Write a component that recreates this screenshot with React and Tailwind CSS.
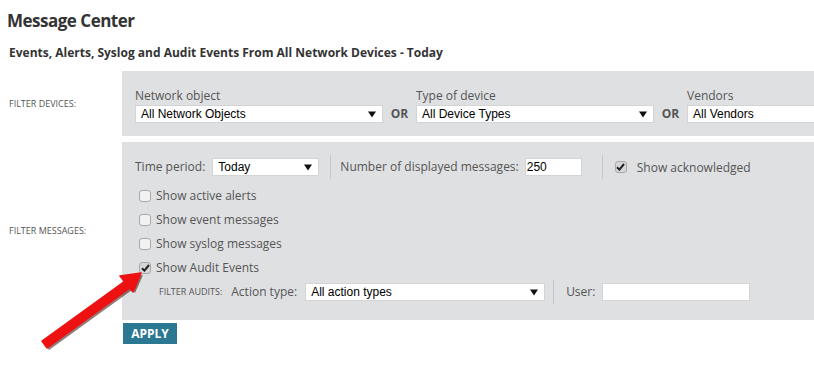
import React from 'react';

const font = { fontFamily: '"Open Sans", "Liberation Sans", sans-serif' };
const arial = { fontFamily: '"Liberation Sans", Arial, sans-serif' };

const Select = ({ value, className }) => (
    <div className={`shrink-0 flex items-center justify-between bg-white border border-[#d4d4d4] h-[18px] pl-[5px] pr-[6px] ${className}`}>
        <span className="text-[12px] text-black leading-none" style={arial}>{value}</span>
        <svg width="8" height="7" viewBox="0 0 8 7"><path d="M0 0.5 L8 0.5 L4 6.5 Z" fill="#111" /></svg>
    </div>
);

const Check = ({ checked }) => (
    <span className={`shrink-0 inline-flex items-center justify-center w-[12px] h-[12px] rounded-[3px] border border-[#a9a9a9] ${checked ? 'bg-[#d6d6d6]' : 'bg-[#f1f1f1]'}`}>
        {checked && (
            <svg width="9" height="8" viewBox="0 0 9 8"><path d="M1 4.2 L3.4 6.6 L8 1" stroke="#222" strokeWidth="2" fill="none" /></svg>
        )}
    </span>
);

const CheckRow = ({ checked, label }) => (
    <div className="flex items-center h-[24px] pl-[4px] gap-[5px]">
        <Check checked={checked} />
        <span className="text-[12px] text-[#555]">{label}</span>
    </div>
);

const Sep = ({ className = 'mx-[8px]' }) => <div className={`shrink-0 w-px h-[24px] bg-[#c6c6c6] ${className}`} />;

const Field = ({ label, width, children }) => (
    <div className="shrink-0 flex flex-col" style={{ width }}>
        <span className="text-[12px] text-[#555] leading-[19px]">{label}</span>
        {children}
    </div>
);

const Or = () => (
    <span className="shrink-0 mt-[19px] text-[12px] font-bold text-[#555] text-center h-[18px] leading-[18px] w-[33px]">OR</span>
);

const App = () => {
    return (
        <div className="relative w-[814px] h-[371px] bg-white overflow-hidden" style={font}>
            <h1 className="text-[17px] font-bold text-[#333] pl-[7px] pt-[7px] leading-[27px] tracking-[-0.5px]">Message Center</h1>
            <h2 className="text-[12px] font-bold text-[#333] pl-[9px] pt-[11px] leading-[16px]">
                Events, Alerts, Syslog and Audit Events From All Network Devices - Today
            </h2>

            {/* Filter devices */}
            <div className="flex mt-[10px]">
                <div className="w-[122px] shrink-0 flex items-center pl-[9px] text-[9px] text-[#555] uppercase">Filter devices:</div>
                <div className="flex-1 min-w-0 overflow-hidden bg-[#dfe0e2] h-[65px] pl-[13px] pt-[15px] flex items-start">
                    <Field label="Network object" width={248}>
                        <Select value="All Network Objects" className="w-[248px]" />
                    </Field>
                    <Or />
                    <Field label="Type of device" width={238}>
                        <Select value="All Device Types" className="w-[238px]" />
                    </Field>
                    <Or />
                    <Field label="Vendors" width={160}>
                        <div className="bg-white border border-[#d4d4d4] h-[18px] pl-[5px] w-[160px] flex items-center">
                            <span className="text-[12px] text-black leading-none" style={arial}>All Vendors</span>
                        </div>
                    </Field>
                </div>
            </div>

            {/* Filter messages */}
            <div className="flex mt-[6px]">
                <div className="w-[122px] shrink-0 flex items-center pl-[9px] text-[9px] text-[#555] uppercase">Filter messages:</div>
                <div className="flex-1 bg-[#dfe0e2] h-[178px] pl-[13px] pt-[13px]">
                    <div className="flex items-center h-[24px]">
                        <span className="text-[12px] text-[#555] mr-[7px]">Time period:</span>
                        <Select value="Today" className="w-[107px]" />
                        <Sep className="ml-[11px] mr-[9px]" />
                        <span className="text-[12px] text-[#555] mr-[6px]">Number of displayed messages:</span>
                        <div className="bg-white border border-[#d4d4d4] h-[18px] w-[57px] pl-[1px] flex items-center">
                            <span className="text-[12px] text-black leading-none" style={arial}>250</span>
                        </div>
                        <Sep className="ml-[20px] mr-[12px]" />
                        <div className="mr-[10px] flex items-center"><Check checked /></div>
                        <span className="text-[12px] text-[#555] mt-[2px]">Show acknowledged</span>
                    </div>
                    <div className="mt-[5px]">
                        <CheckRow label="Show active alerts" />
                        <CheckRow label="Show event messages" />
                        <CheckRow label="Show syslog messages" />
                        <CheckRow checked label="Show Audit Events" />
                    </div>
                    <div className="flex items-center h-[24px] pl-[24px]">
                        <span className="text-[9px] text-[#555] uppercase mr-[9px]">Filter audits:</span>
                        <span className="text-[12px] text-[#555] mr-[8px]">Action type:</span>
                        <Select value="All action types" className="w-[240px]" />
                        <Sep />
                        <span className="text-[12px] text-[#555] mr-[7px] ml-[4px]">User:</span>
                        <div className="bg-white border border-[#d4d4d4] h-[18px] w-[148px]" />
                    </div>
                </div>
            </div>

            <div className="pl-[123px] pt-[3px] flex">
                <button className="block bg-[#2a7891] text-white text-[12px] font-bold h-[21px] w-[54px] leading-[21px]">APPLY</button>
            </div>

            {/* Red annotation arrow */}
            <svg className="absolute left-0 top-0 pointer-events-none" width="814" height="371">
                <g transform="translate(2,2)" fill="#3a1010" opacity="0.55">
                    <path d="M42 341 L125 281 L130 288 L47 348 Z" />
                    <path d="M141 273 L121 276 L133 291 Z" />
                </g>
                <path d="M42 341 L125 281 L130 288 L47 348 Z" fill="#ee1111" strokeLinejoin="round" stroke="#ee1111" strokeWidth="1.5" />
                <path d="M141 273 L120 276 L133 292 Z" fill="#ee1111" stroke="#ee1111" strokeWidth="1.5" strokeLinejoin="round" />
            </svg>
        </div>
    );
};

export default App;
